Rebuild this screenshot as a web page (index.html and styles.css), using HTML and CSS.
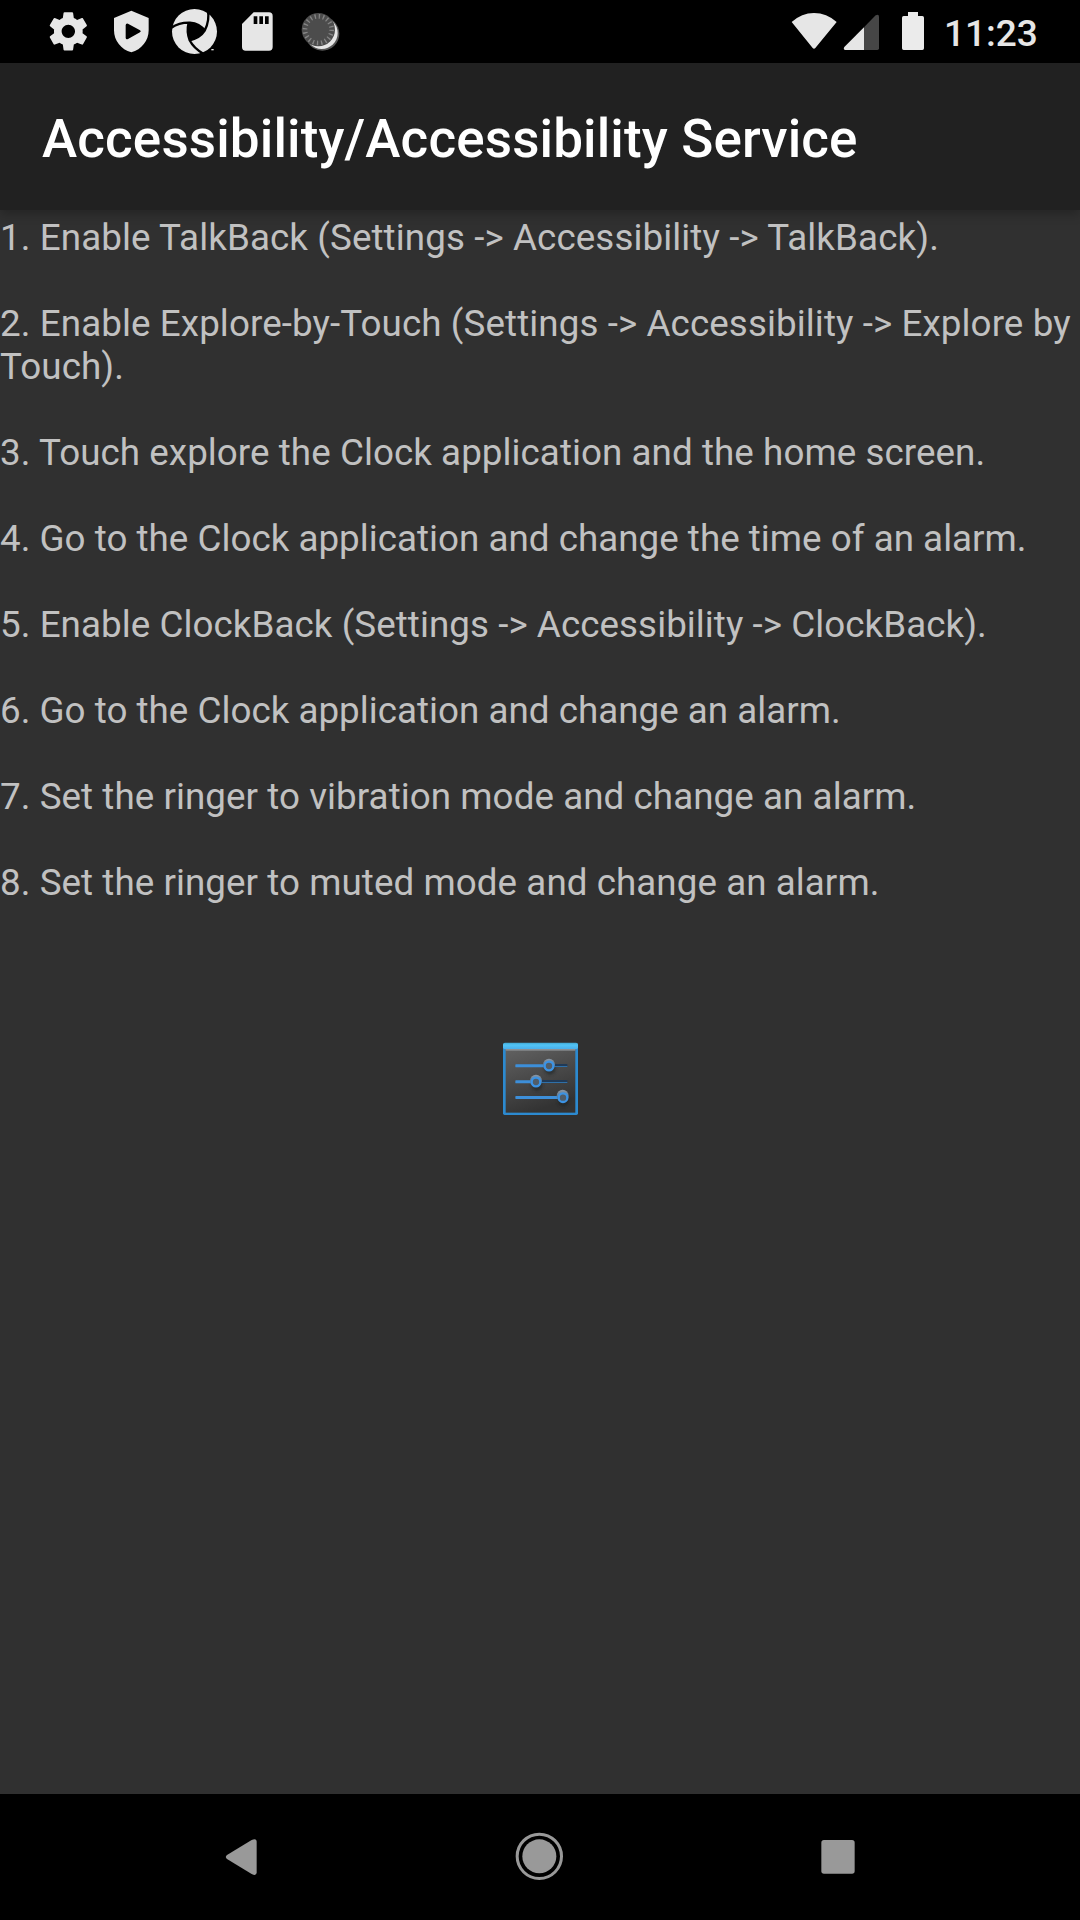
FILE: index.html
```html
<!DOCTYPE html>
<html lang="en">
<head>
<meta charset="utf-8">
<title>Accessibility/Accessibility Service</title>
<link rel="stylesheet" href="styles.css">
</head>
<body>
<div class="screen">
  <header class="status-bar">
    <div class="notifications">
      <svg class="notification" viewBox="-9 0 189 189"><path transform="translate(16.1 25.1) scale(5.74)" d="M19.43 12.98c.04-.32.07-.64.07-.98s-.03-.66-.07-.98l2.11-1.65c.19-.15.24-.42.12-.64l-2-3.46c-.12-.22-.39-.3-.61-.22l-2.49 1c-.52-.4-1.08-.73-1.69-.98l-.38-2.65C14.46 2.18 14.25 2 14 2h-4c-.25 0-.46.18-.49.42l-.38 2.65c-.61.25-1.17.59-1.69.98l-2.49-1c-.23-.09-.49 0-.61.22l-2 3.46c-.13.22-.07.49.12.64l2.11 1.65c-.04.32-.07.65-.07.98s.03.66.07.98l-2.11 1.65c-.19.15-.24.42-.12.64l2 3.46c.12.22.39.3.61.22l2.49-1c.52.4 1.08.73 1.69.98l.38 2.65c.03.24.24.42.49.42h4c.25 0 .46-.18.49-.42l.38-2.65c.61-.25 1.17-.59 1.69-.98l2.49 1c.23.09.49 0 .61-.22l2-3.46c.12-.22.07-.49-.12-.64l-2.11-1.65zM12 15.5c-1.93 0-3.5-1.57-3.5-3.5s1.57-3.5 3.5-3.5 3.5 1.57 3.5 3.5-1.57 3.5-3.5 3.5z"/></svg>
      <svg class="notification" viewBox="180 0 189 189"><path fill-rule="evenodd" d="M274 32 326 54V91C326 122 305 149 274 157C243 149 222 122 222 91V54ZM257 75V114Q258 120 264 117L300 97Q305 94 300 91L264 71Q258 69 257 75Z"/></svg>
      <svg class="notification" viewBox="9 0 189 189">
        <circle cx="103.500" cy="94.500" r="67.500"/>
        <path class="cutout" d="M86 68Q118 70 134 92Q122 113 89 121Q79 95 86 68Z"/>
        <path class="slit" d="M34 83Q58 67 90 68Q119 70 134 92M143 28Q150 62 134 92Q121 113 89 121M86 68Q79 95 89 121Q101 145 131 162"/>
        <path d="M154 147h7v4h-7z"/>
      </svg>
      <svg class="notification" viewBox="198 0 189 189"><path fill-rule="evenodd" d="M281 37H327Q338 37 338 48V141Q338 152 327 152H257Q246 152 246 141V72ZM281 49V72H292V49ZM298 49V72H309V49ZM315 49V72H326V49Z"/></svg>
      <svg class="notification" viewBox="387 0 189 189">
        <circle class="spinner-rim" cx="487" cy="101" r="51"/>
        <circle cx="485" cy="99" r="48"/>
        <circle class="spinner-disc" cx="475" cy="89" r="50"/>
        <circle class="spinner-ticks" cx="475" cy="89" r="40"/>
      </svg>
    </div>
    <div class="system">
      <svg width="53" height="63" viewBox="24 0 159 189"><path d="M35 66Q65 39 102 39Q140 39 170 66L106 144Q102 149 98 144Z"/></svg>
      <svg width="49" height="63" viewBox="183 0 147 189"><path class="signal-empty" d="M252 82 287 46Q297 40 297 51V145Q297 150 292 150H252Z"/><path d="M252 82V150H195Q189 148 193 141Z"/></svg>
      <svg width="54" height="63" viewBox="330 0 162 189"><path class="battery" d="M384 36H414V48H427Q432 48 432 53V145Q432 150 427 150H371Q366 150 366 145V53Q366 48 371 48H384Z"/></svg>
      <span class="clock">11:23</span>
    </div>
  </header>
  <div class="app-bar"><h1 class="title">Accessibility/Accessibility Service</h1></div>
  <main class="content">
    <p class="step step-wide">1. Enable TalkBack (Settings -&gt; Accessibility -&gt; TalkBack).</p>
    <p class="step step-wide">2. Enable Explore-by-Touch (Settings -&gt; Accessibility -&gt; Explore by Touch).</p>
    <p class="step">3. Touch explore the Clock application and the home screen.</p>
    <p class="step step-narrow">4. Go to the Clock application and change the time of an alarm.</p>
    <p class="step">5. Enable ClockBack (Settings -&gt; Accessibility -&gt; ClockBack).</p>
    <p class="step step-narrow">6. Go to the Clock application and change an alarm.</p>
    <p class="step">7. Set the ringer to vibration mode and change an alarm.</p>
    <p class="step">8. Set the ringer to muted mode and change an alarm.</p>
    <svg class="settings" viewBox="0 0 300 300">
      <defs>
        <linearGradient id="panel" x1="0" y1="0" x2="0.35" y2="1"><stop offset="0" stop-color="#626262"/><stop offset="0.5" stop-color="#4a4a4a"/><stop offset="1" stop-color="#333"/></linearGradient>
        <linearGradient id="cap" x1="0" y1="0" x2="0" y2="1"><stop offset="0" stop-color="#3fa5cf"/><stop offset="0.35" stop-color="#52c4f5"/><stop offset="1" stop-color="#4aaeea"/></linearGradient>
        <linearGradient id="knob" x1="0" y1="0" x2="0" y2="1"><stop offset="0" stop-color="#8b98a5"/><stop offset="1" stop-color="#365f86"/></linearGradient>
        <filter id="soft" x="-50%" y="-50%" width="200%" height="200%"><feGaussianBlur stdDeviation="4"/></filter>
      </defs>
      <rect x="39" y="40" width="225" height="215" rx="5" fill="#2c8ad0"/>
      <rect x="47" y="55" width="209" height="193" fill="url(#panel)"/>
      <rect x="39" y="38" width="225" height="20" rx="6" fill="url(#cap)"/>
      <rect x="47" y="57" width="209" height="5" fill="#8b8f92"/>
      <g fill="#1d2022" opacity=".6" filter="url(#soft)"><circle cx="180" cy="117" r="17"/><circle cx="141" cy="166" r="17"/><circle cx="220" cy="213" r="17"/></g>
      <g fill="#203a57"><rect x="190" y="102" width="42" height="8"/><rect x="150" y="150" width="82" height="8"/></g>
      <g fill="#3d8fd9"><rect x="76" y="103" width="92" height="9" rx="2"/><rect x="76" y="151" width="52" height="9" rx="2"/><rect x="76" y="198" width="130" height="9" rx="2"/></g>
      <g fill="#2f70a8"><rect x="193" y="108" width="39" height="3"/><rect x="154" y="156" width="78" height="3"/></g>
      <g fill="url(#knob)"><circle cx="177" cy="104" r="18"/><circle cx="138" cy="152" r="18"/><circle cx="218" cy="197" r="18"/></g>
      <g fill="#505d69" stroke="#3c93e4" stroke-width="7"><circle cx="177" cy="108" r="13"/><circle cx="138" cy="156" r="13"/><circle cx="219" cy="203" r="13"/></g>
    </svg>
  </main>
  <nav class="nav-bar">
    <svg class="nav-key" viewBox="0 0 300 270"><path d="M81 135 155 90Q170 83 170 96V187Q170 200 155 192L81 147Q74 141 81 135Z"/></svg>
    <svg class="nav-key" viewBox="15 0 300 270"><circle cx="148" cy="139" r="51"/><circle class="home-ring" cx="148" cy="139" r="66.500"/></svg>
    <svg class="nav-key" viewBox="0 0 300 270"><rect x="94" y="90" width="100" height="101" rx="8"/></svg>
  </nav>
</div>
</body>
</html>
```
FILE: styles.css
```css
body {
  margin: 0;
  background: #303030;
  font-family: Roboto, sans-serif;
}

.screen {
  display: flex;
  flex-direction: column;
  width: 1080px;
  height: 1920px;
  overflow: hidden;
}

svg {
  display: block;
  flex: none;
}

.status-bar {
  display: flex;
  justify-content: space-between;
  flex: none;
  height: 63px;
  padding: 0 42px 0 37px;
  background: #000;
  fill: #e6e6e6;
}

.notifications,
.system {
  display: flex;
}

.notification {
  width: 63px;
  height: 63px;
}

.cutout {
  fill: #000;
}

.slit {
  fill: none;
  stroke: #000;
  stroke-width: 7;
}

.spinner-rim {
  fill: #555;
}

.spinner-disc {
  fill: #4c4c4c;
}

.spinner-ticks {
  fill: none;
  stroke: #858585;
  stroke-width: 14;
  stroke-dasharray: 4 8.566;
}

.signal-empty {
  fill: #464646;
}

.battery {
  fill: #ebebeb;
}

.clock {
  width: 94px;
  padding-top: 12px;
  color: #e6e6e6;
  font-size: 37px;
  font-weight: 500;
  line-height: 43px;
  white-space: nowrap;
}

.app-bar {
  display: flex;
  align-items: center;
  flex: none;
  height: 147px;
  padding: 0 42px;
  box-sizing: border-box;
  background: #212121;
  box-shadow: 0 4px 10px rgba(0, 0, 0, 0.25);
}

.title {
  margin: 0;
  padding-top: 4px;
  color: #fff;
  font-size: 53px;
  font-weight: 500;
  letter-spacing: 0.13px;
  line-height: 62px;
  white-space: nowrap;
}

.content {
  display: flex;
  flex: 1;
  flex-direction: column;
  gap: 43px;
  padding-top: 6px;
  color: #c1c1c1;
}

.step {
  margin: 0;
  font-size: 36.75px;
  letter-spacing: 0.065px;
  line-height: 43px;
}

.step-wide {
  letter-spacing: 0.1px;
}

.step-narrow {
  letter-spacing: 0.025px;
}

.settings {
  width: 100px;
  height: 100px;
  margin: 83px auto 0;
}

.nav-bar {
  display: flex;
  align-items: flex-start;
  justify-content: space-between;
  flex: none;
  height: 126px;
  padding: 16px 190px 0 200px;
  box-sizing: border-box;
  background: #000;
  fill: #999;
}

.nav-key {
  width: 100px;
  height: 90px;
}

.home-ring {
  fill: none;
  stroke: #999;
  stroke-width: 9;
}
```
